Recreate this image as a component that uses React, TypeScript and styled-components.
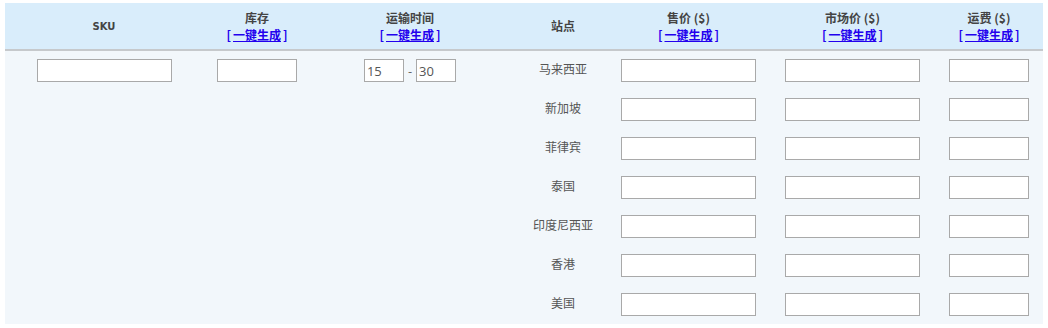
import * as React from "react";
import styled, { createGlobalStyle } from "styled-components";

const GlobalStyle = createGlobalStyle`
  body {
    margin: 0;
    background: #ffffff;
    font-family: "Noto Sans CJK SC", "Liberation Sans", sans-serif;
  }
`;

const COLS = "198px 108px 198px 108px 143px 185px 88px";

const Table = styled.div`
  margin: 3px 5px 0 5px;
  width: 1038px;
  background: #f2f7fb;
`;

const HeadRow = styled.div`
  display: grid;
  grid-template-columns: ${COLS};
  padding-right: 10px;
  height: 46px;
  background: #d9edfb;
  border-bottom: 2px solid #c6c9cc;
`;

const HeadCell = styled.div`
  display: flex;
  flex-direction: column;
  align-items: center;
  justify-content: center;
  color: #444;
  font-weight: bold;
  font-size: 12px;
  line-height: 17px;
  padding-bottom: 1px;
`;

const SkuLabel = styled.span`
  font-family: "DejaVu Sans", sans-serif;
  font-size: 10px;
  padding-top: 2px;
`;

const QuickLink = styled.a`
  color: #2200ee;
  font-weight: bold;
  text-decoration: none;
  cursor: pointer;
  span {
    text-decoration: underline;
    padding: 0 2px;
  }
`;

const Body = styled.div`
  display: grid;
  grid-template-columns: ${COLS};
  padding: 8px 10px 8px 0;
  height: 257px;
`;

const Col = styled.div`
  display: flex;
  flex-direction: column;
  align-items: center;
  gap: 16px;
`;

const Cell = styled.div<{ $label?: boolean }>`
  height: 23px;
  display: flex;
  align-items: center;
  justify-content: center;
  gap: 3px;
  color: #555;
  font-size: 12px;
  padding-bottom: ${(p) => (p.$label ? "4px" : "0")};
  box-sizing: border-box;
`;

const Field = styled.input<{ $w: number }>`
  box-sizing: border-box;
  width: ${(p) => p.$w}px;
  height: 23px;
  border: 1px solid #a9a9a9;
  background: #fff;
  padding: 0 2px;
  font-family: "Open Sans", "Noto Sans", sans-serif;
  font-size: 13px;
  color: #555;
  outline: none;
`;

const Dash = styled.span`
  color: #555;
  font-size: 12px;
  padding: 0 1px;
`;

const Header = ({ title, link }: { title: React.ReactNode; link?: boolean }) => (
  <HeadCell>
    {title}
    {link && (
      <QuickLink>
        [<span>一键生成</span>]
      </QuickLink>
    )}
  </HeadCell>
);

const sites = ["马来西亚", "新加坡", "菲律宾", "泰国", "印度尼西亚", "香港", "美国"];

export default function App() {
  return (
    <>
      <GlobalStyle />
      <Table>
        <HeadRow>
          <Header title={<SkuLabel>SKU</SkuLabel>} />
          <Header title="库存" link />
          <Header title="运输时间" link />
          <Header title="站点" />
          <Header title="售价 ($)" link />
          <Header title="市场价 ($)" link />
          <Header title="运费 ($)" link />
        </HeadRow>
        <Body>
          <Col>
            <Cell>
              <Field $w={135} />
            </Cell>
          </Col>
          <Col>
            <Cell>
              <Field $w={80} />
            </Cell>
          </Col>
          <Col>
            <Cell>
              <Field $w={40} defaultValue="15" />
              <Dash>-</Dash>
              <Field $w={40} defaultValue="30" />
            </Cell>
          </Col>
          <Col>
            {sites.map((s) => (
              <Cell key={s} $label>
                {s}
              </Cell>
            ))}
          </Col>
          <Col>
            {sites.map((s) => (
              <Cell key={s}>
                <Field $w={135} />
              </Cell>
            ))}
          </Col>
          <Col>
            {sites.map((s) => (
              <Cell key={s}>
                <Field $w={135} />
              </Cell>
            ))}
          </Col>
          <Col>
            {sites.map((s) => (
              <Cell key={s}>
                <Field $w={80} />
              </Cell>
            ))}
          </Col>
        </Body>
      </Table>
    </>
  );
}
